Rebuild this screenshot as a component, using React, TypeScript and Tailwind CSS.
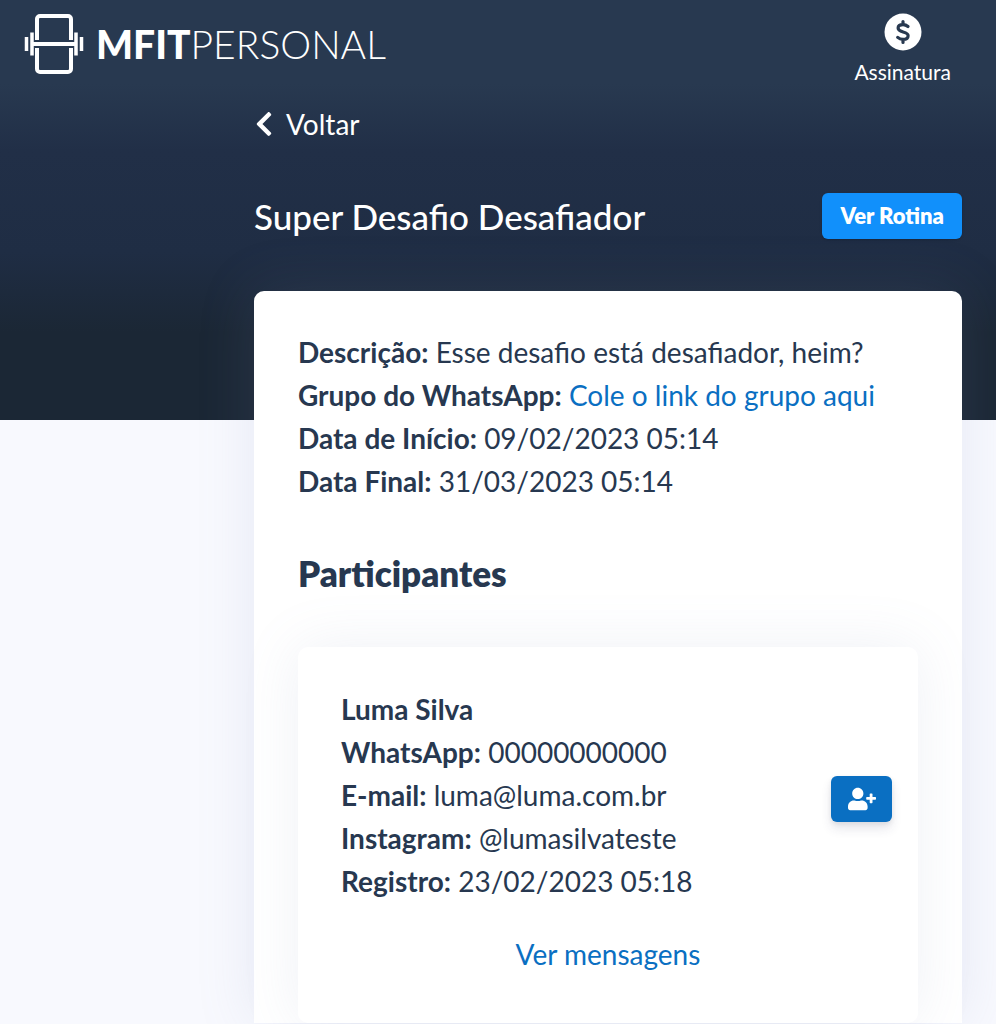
import { FaChevronLeft, FaUserPlus } from 'react-icons/fa';

const challenge = [
  { label: 'Descrição:', value: 'Esse desafio está desafiador, heim?' },
  { label: 'Grupo do WhatsApp:', value: 'Cole o link do grupo aqui', href: '#grupo' },
  { label: 'Data de Início:', value: '09/02/2023 05:14' },
  { label: 'Data Final:', value: '31/03/2023 05:14' },
];

const participant = {
  name: 'Luma Silva',
  fields: [
    { label: 'WhatsApp:', value: '00000000000' },
    { label: 'E-mail:', value: 'luma@luma.com.br' },
    { label: 'Instagram:', value: '@lumasilvateste' },
    { label: 'Registro:', value: '23/02/2023 05:18' },
  ],
};

function Field({ label, value, href }: { label: string; value: string; href?: string }) {
  return (
    <p>
      <strong className="font-bold">{label}</strong>{' '}
      {href ? <a href={href} className="text-[#0a6fc2]">{value}</a> : value}
    </p>
  );
}

function Logo() {
  return (
    <a href="#inicio" className="flex items-center gap-3 text-white">
      <svg width="60" height="62" viewBox="0 0 60 62" fill="none" stroke="currentColor" aria-hidden="true">
        <path d="M13 27V6a3 3 0 0 1 3-3h28a3 3 0 0 1 3 3v21M13 35v21a3 3 0 0 0 3 3h28a3 3 0 0 0 3-3V35" strokeWidth="4" />
        <path d="M8 31h44" strokeWidth="4" />
        <path d="M2.500 24v14M57.500 24v14M8 19.500v23M52 19.500v23" strokeWidth="3.500" />
      </svg>
      <span className="flex items-baseline text-[39px] leading-[60px]">
        <span className="font-black">MFIT</span>
        <span className="font-light">PERSONAL</span>
      </span>
    </a>
  );
}

export default function App() {
  return (
    <div className="min-h-screen overflow-hidden bg-[#f8f9fe] font-['Lato','Open_Sans',sans-serif] text-[#273850]">
      <div className="bg-[linear-gradient(#283950_20%,#212f47_36%,#1f2d44_60%,#1b2735_79%)] pb-[129px]">
        {/* Top bar */}
        <header className="flex items-start justify-between pl-6 pr-[45px] pt-[13px]">
          <Logo />
          <a href="#assinatura" className="flex flex-col items-center gap-[7px] text-[21px] leading-7 text-white">
            <svg width="38" height="38" viewBox="0 0 38 38" aria-hidden="true">
              <circle cx="19" cy="19" r="18.500" fill="white" />
              <path
                d="M24 13.500c-1.500-1.300-3-1.900-5-1.900-3 0-4.900 1.400-4.900 3.500 0 5 10 2.700 10 7.600 0 2.300-2 3.700-5 3.700-2.200 0-4-.7-5.400-2M19 8.500v3M19 26.500v3"
                fill="none"
                stroke="#283950"
                strokeWidth="3.200"
                strokeLinecap="round"
              />
            </svg>
            Assinatura
          </a>
        </header>

        {/* Page heading */}
        <div className="ml-[254px] mr-[34px] pt-4 text-white">
          <a href="#voltar" className="inline-flex items-center gap-3 text-[28px] leading-[44px]">
            <FaChevronLeft className="w-5" aria-hidden="true" />
            Voltar
          </a>
          <div className="mt-[47px] flex items-center justify-between">
            <h1 className="text-[35px] leading-[46px] font-medium">Super Desafio Desafiador</h1>
            <button className="rounded-md bg-[#1190fb] px-[18px] text-[22px] leading-[46px] font-extrabold shadow-sm">
              Ver Rotina
            </button>
          </div>
          <div className="h-[52px]" />
        </div>
      </div>

      {/* Challenge card */}
      <main className="ml-[254px] mr-[34px] -mt-[129px] rounded-t-[10px] bg-white px-11 pt-10 text-[28px] leading-[43px] shadow-[0_0_58px_rgba(125,138,185,0.15)]">
        {challenge.map((item) => (
          <Field key={item.label} {...item} />
        ))}

        <h2 className="mt-12 text-[35px] leading-[44px] font-extrabold">Participantes</h2>

        <section className="mt-[52px] rounded-[10px] bg-white px-[43px] pt-[41px] pb-[47px] shadow-[0_0_58px_rgba(125,138,185,0.12)]">
          <div className="flex items-center justify-between">
            <div className="pb-1.5">
              <h3 className="font-bold">{participant.name}</h3>
              {participant.fields.map((item) => (
                <Field key={item.label} {...item} />
              ))}
            </div>
            <button
              aria-label="Adicionar participante"
              className="-mr-[17px] flex h-[46px] w-[61px] items-center justify-center rounded-md bg-[#0a6fc2] text-white shadow-[0_7px_11px_rgba(50,50,93,0.11),0_2px_5px_rgba(0,0,0,0.08)]"
            >
              <FaUserPlus className="text-[28px]" aria-hidden="true" />
            </button>
          </div>
          <div className="mt-6 text-center">
            <a href="#mensagens" className="text-[#0a6fc2]">Ver mensagens</a>
          </div>
        </section>
      </main>
    </div>
  );
}
